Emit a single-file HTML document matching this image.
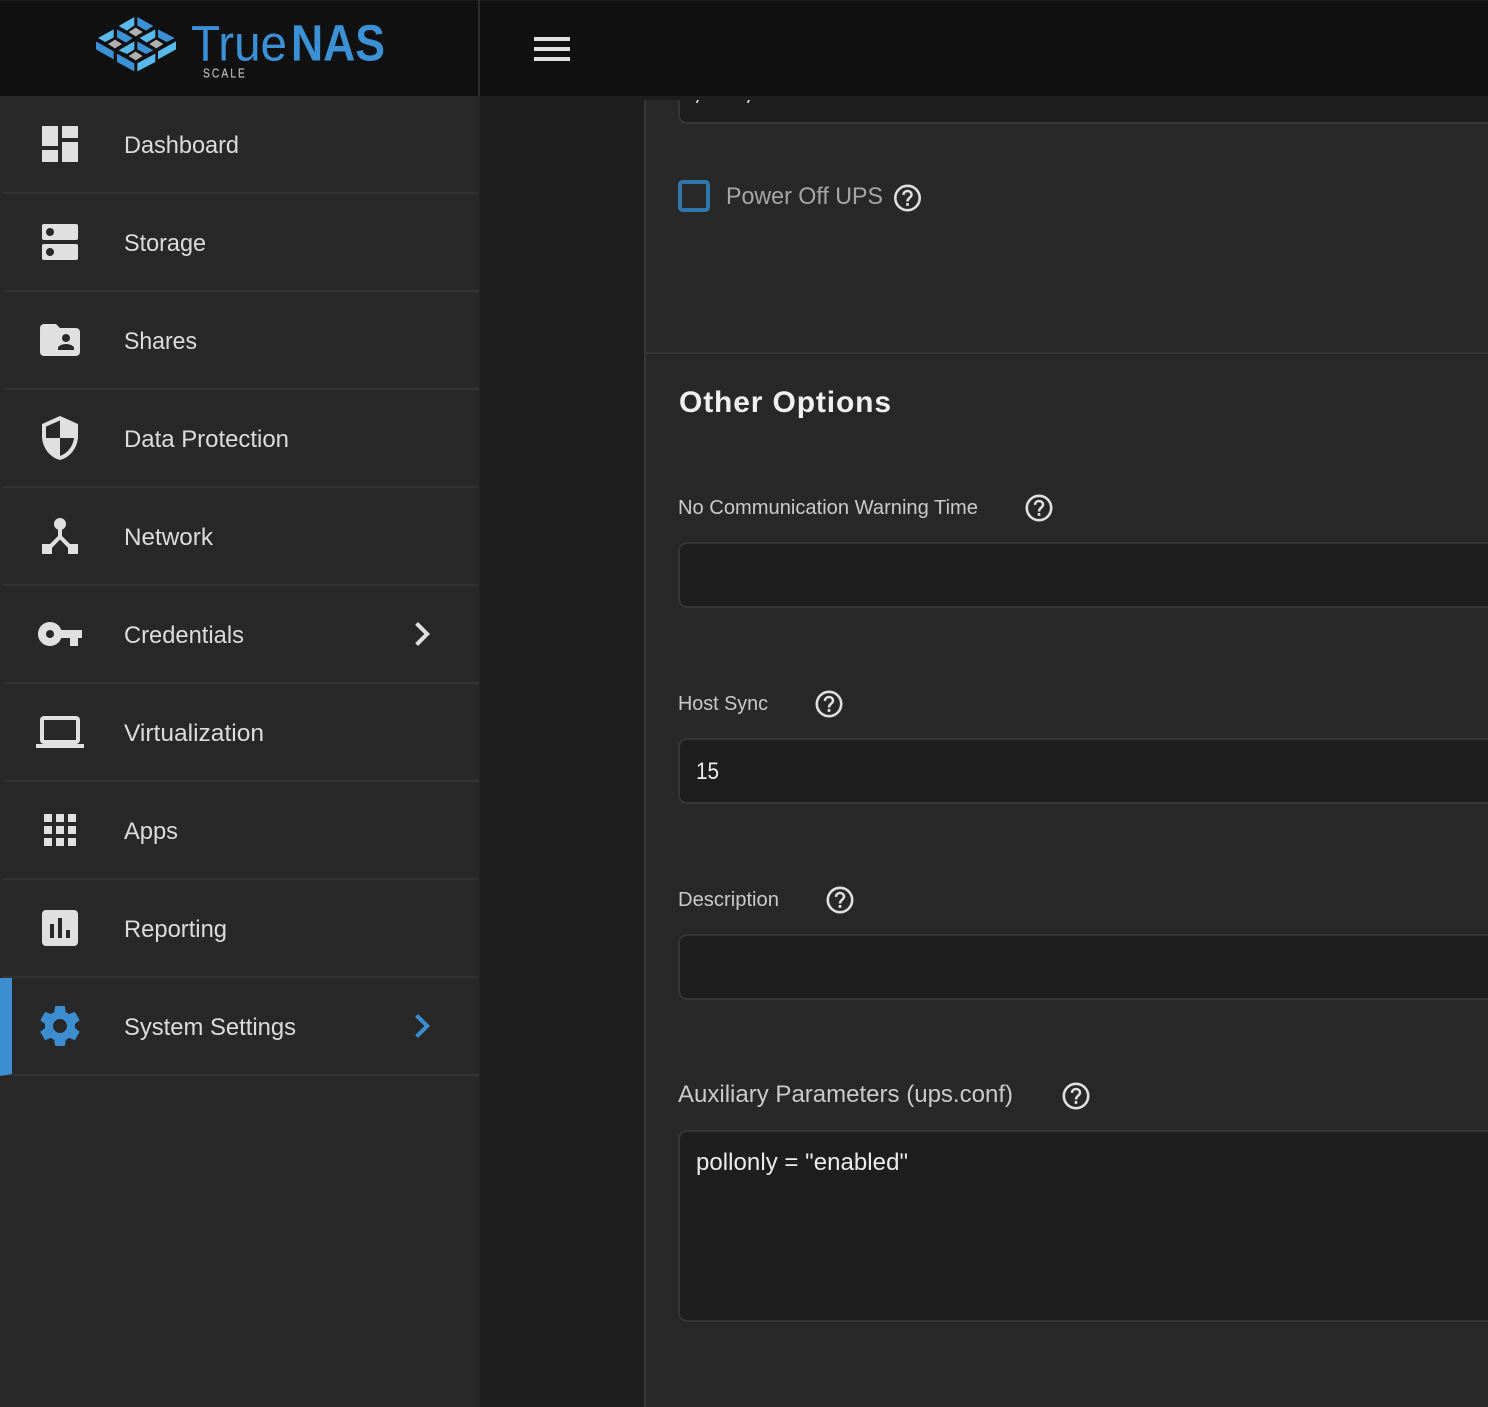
<!DOCTYPE html>
<html lang="en">
<head>
<meta charset="utf-8">
<title>TrueNAS SCALE</title>
<style>
html,body{margin:0;padding:0;background:#1e1e1e;width:1488px;height:1407px;overflow:hidden}
svg{display:block;position:absolute;left:0;top:0}
text{font-family:"Liberation Sans",sans-serif}
.nav{font-size:24px;fill:#dcdcdc}
.lbl{font-size:20.5px;fill:#cacaca}
.val{font-size:24px;fill:#ececec}
.ic{fill:#e0e0e0}
.sep{fill:#333}
.inp{fill:#1e1e1e;stroke:#363636;stroke-width:2}
</style>
</head>
<body>
<svg width="1488" height="1407" viewBox="0 0 1488 1407" xmlns="http://www.w3.org/2000/svg">
<defs>
<g id="help">
<circle cx="16" cy="16" r="12.2" fill="none" stroke="#e0e0e0" stroke-width="2.6"/>
<path d="M12 12.9c0-2.3 1.7-3.9 4-3.9s4 1.5 4 3.6c0 3.2-4 3-4 6.9" fill="none" stroke="#e0e0e0" stroke-width="2.5"/>
<rect x="14.7" y="21" width="2.6" height="2.9" fill="#e0e0e0"/>
</g>
<path id="chev" d="M10 6L8.59 7.41 13.17 12l-4.58 4.59L10 18l6-6z"/>
</defs>

<!-- backgrounds -->
<rect x="0" y="0" width="1488" height="1407" fill="#1e1e1e"/>
<rect x="0" y="96" width="478" height="1311" fill="#282828"/>
<rect x="478" y="96" width="2" height="1311" fill="#262626"/>

<!-- card -->
<rect x="644" y="100" width="844" height="1307" fill="#282828"/>
<rect x="644" y="100" width="2" height="1307" fill="#363636"/>
<rect x="646" y="352" width="842" height="2" fill="#363636"/>

<!-- clipped first input -->
<rect x="679" y="60" width="900" height="63" rx="8" class="inp"/>
<polygon points="697,100 699,100 697.4,103 696,103" fill="#eee"/>
<polygon points="748,100 750,100 748.4,103 747,103" fill="#eee"/>
<rect x="644" y="96" width="844" height="4" fill="#1e1e1e"/>

<!-- header -->
<rect x="0" y="0" width="1488" height="96" fill="#111"/>
<rect x="0" y="0" width="1488" height="1" fill="#1a1a1a"/>
<rect x="478" y="0" width="2" height="96" fill="#2c2c2c"/>

<!-- logo -->
<g transform="translate(92 12) scale(.3333)">
<g fill="#5ab9ec">
<polygon points="80,42 127,15 127,40 105,56"/>
<polygon points="190,52 143,78 164,92 190,76"/>
<polygon points="18,78 65,52 65,76 40,90"/>
<polygon points="80,115 127,88 127,112 105,126"/>
<polygon points="252,88 252,112 198,142 198,118"/>
<polygon points="136,154 136,178 190,150 190,125"/>
</g>
<g fill="#3c91d6">
<polygon points="136,15 184,42 162,56 136,40"/>
<polygon points="75,52 122,78 102,92 75,76"/>
<polygon points="198,52 248,78 224,90 198,76"/>
<polygon points="136,88 184,115 162,126 136,112"/>
<polygon points="12,88 12,112 65,142 65,118"/>
<polygon points="75,125 75,150 127,178 127,154"/>
</g>
<g fill="#b0b0b0">
<polygon points="131,47 152,60 131,73 110,60"/>
<polygon points="69,83 90,96 69,109 48,96"/>
<polygon points="193,83 214,96 193,109 172,96"/>
<polygon points="131,119 152,132 131,145 110,132"/>
</g>
</g>
<text x="191" y="60.5" font-size="50" fill="#3c91d6" textLength="96" lengthAdjust="spacingAndGlyphs">True</text>
<text x="291" y="60.5" font-size="51" font-weight="700" fill="#3c91d6" textLength="94" lengthAdjust="spacingAndGlyphs">NAS</text>
<text transform="translate(203 77.5) scale(.82 1)" x="0" y="0" font-size="12.5" fill="#b4b4b4" stroke="#b4b4b4" stroke-width=".25" textLength="51" lengthAdjust="spacing">SCALE</text>

<!-- hamburger -->
<rect x="534" y="37" width="36" height="4" fill="#e0e0e0"/>
<rect x="534" y="47" width="36" height="4" fill="#e0e0e0"/>
<rect x="534" y="57" width="36" height="4" fill="#e0e0e0"/>

<!-- sidebar separators -->
<rect class="sep" x="3" y="192" width="475" height="2"/>
<rect class="sep" x="3" y="290" width="475" height="2"/>
<rect class="sep" x="3" y="388" width="475" height="2"/>
<rect class="sep" x="3" y="486" width="475" height="2"/>
<rect class="sep" x="3" y="584" width="475" height="2"/>
<rect class="sep" x="3" y="682" width="475" height="2"/>
<rect class="sep" x="3" y="780" width="475" height="2"/>
<rect class="sep" x="3" y="878" width="475" height="2"/>
<rect class="sep" x="3" y="976" width="475" height="2"/>
<rect class="sep" x="3" y="1074" width="475" height="2"/>
<polygon points="0,978 12,978 12,1074 0,1076" fill="#3c8ed1"/>

<!-- sidebar icons -->
<g class="ic">
<path transform="translate(36 120) scale(2)" d="M3 13h8V3H3v10zm0 8h8v-6H3v6zm10 0h8V11h-8v10zm0-18v6h8V3h-8z"/>
<path fill-rule="evenodd" d="M44 224h32a2 2 0 0 1 2 2v12a2 2 0 0 1-2 2H44a2 2 0 0 1-2-2v-12a2 2 0 0 1 2-2zm6 4a4 4 0 1 0 0 8 4 4 0 0 0 0-8zM44 244h32a2 2 0 0 1 2 2v12a2 2 0 0 1-2 2H44a2 2 0 0 1-2-2v-12a2 2 0 0 1 2-2zm6 4a4 4 0 1 0 0 8 4 4 0 0 0 0-8z"/>
<path transform="translate(36 316) scale(2)" d="M20 6h-8l-2-2H4c-1.1 0-1.99.9-1.99 2L2 18c0 1.1.9 2 2 2h16c1.1 0 2-.9 2-2V8c0-1.1-.9-2-2-2zm-5 3c1.1 0 2 .9 2 2s-.9 2-2 2-2-.9-2-2 .9-2 2-2zm4 8h-8v-1c0-1.33 2.67-2 4-2s4 .67 4 2v1z"/>
<path transform="translate(36 414) scale(2)" d="M12 1L3 5v6c0 5.55 3.84 10.74 9 12 5.16-1.26 9-6.45 9-12V5l-9-4zm0 10.99h7c-.53 4.12-3.28 7.79-7 8.94V12H5V6.3l7-3.11v8.8z"/>
<path transform="translate(36 512) scale(2)" d="M17 16l-4-4V8.82C14.16 8.4 15 7.3 15 6c0-1.66-1.34-3-3-3S9 4.34 9 6c0 1.3.84 2.4 2 2.82V12l-4 4H3v5h5v-3.05l4-4.2 4 4.2V21h5v-5h-4z"/>
<path transform="translate(36 610) scale(2)" d="M12.65 10C11.83 7.67 9.61 6 7 6c-3.31 0-6 2.69-6 6s2.69 6 6 6c2.61 0 4.83-1.67 5.65-4H17v4h4v-4h2v-4H12.65zM7 14c-1.1 0-2-.9-2-2s.9-2 2-2 2 .9 2 2-.9 2-2 2z"/>
<path transform="translate(36 708) scale(2)" d="M20 18c1.1 0 1.99-.9 1.99-2L22 6c0-1.1-.9-2-2-2H4c-1.1 0-2 .9-2 2v10c0 1.1.9 2 2 2H0v2h24v-2h-4zM4 6h16v10H4V6z"/>
<path transform="translate(36 806) scale(2)" d="M4 8h4V4H4v4zm6 12h4v-4h-4v4zm-6 0h4v-4H4v4zm0-6h4v-4H4v4zm6 0h4v-4h-4v4zm6-10v4h4V4h-4zm-6 4h4V4h-4v4zm6 6h4v-4h-4v4zm0 6h4v-4h-4v4z"/>
<path transform="translate(36 904) scale(2)" d="M19 3H5c-1.1 0-2 .9-2 2v14c0 1.1.9 2 2 2h14c1.1 0 2-.9 2-2V5c0-1.1-.9-2-2-2zM9 17H7v-7h2v7zm4 0h-2V7h2v10zm4 0h-2v-4h2v4z"/>
<use href="#chev" transform="translate(398 610) scale(2)"/>
</g>
<path fill="#3c8ed1" transform="translate(36 1002) scale(2)" d="M19.43 12.98c.04-.32.07-.64.07-.98s-.03-.66-.07-.98l2.11-1.65c.19-.15.24-.42.12-.64l-2-3.46c-.12-.22-.39-.3-.61-.22l-2.49 1c-.52-.4-1.08-.73-1.69-.98l-.38-2.65C14.46 2.18 14.25 2 14 2h-4c-.25 0-.46.18-.49.42l-.38 2.65c-.61.25-1.17.59-1.69.98l-2.49-1c-.23-.09-.49 0-.61.22l-2 3.46c-.13.22-.07.49.12.64l2.11 1.65c-.04.32-.07.65-.07.98s.03.66.07.98l-2.11 1.65c-.19.15-.24.42-.12.64l2 3.46c.12.22.39.3.61.22l2.49-1c.52.4 1.08.73 1.69.98l.38 2.65c.03.24.24.42.49.42h4c.25 0 .46-.18.49-.42l.38-2.65c.61-.25 1.17-.59 1.69-.98l2.49 1c.23.09.49 0 .61-.22l2-3.46c.12-.22.07-.49-.12-.64l-2.11-1.65zM12 15.5c-1.93 0-3.5-1.57-3.5-3.5s1.57-3.5 3.5-3.5 3.5 1.57 3.5 3.5-1.57 3.5-3.5 3.5z"/>
<use href="#chev" fill="#3c8ed1" transform="translate(398 1002) scale(2)"/>

<!-- sidebar labels -->
<text class="nav" x="124" y="153" textLength="115" lengthAdjust="spacingAndGlyphs">Dashboard</text>
<text class="nav" x="124" y="251" textLength="82" lengthAdjust="spacingAndGlyphs">Storage</text>
<text class="nav" x="124" y="349" textLength="73" lengthAdjust="spacingAndGlyphs">Shares</text>
<text class="nav" x="124" y="447" textLength="165" lengthAdjust="spacingAndGlyphs">Data Protection</text>
<text class="nav" x="124" y="545" textLength="89" lengthAdjust="spacingAndGlyphs">Network</text>
<text class="nav" x="124" y="643" textLength="120" lengthAdjust="spacingAndGlyphs">Credentials</text>
<text class="nav" x="124" y="741" textLength="140" lengthAdjust="spacingAndGlyphs">Virtualization</text>
<text class="nav" x="124" y="839" textLength="54" lengthAdjust="spacingAndGlyphs">Apps</text>
<text class="nav" x="124" y="937" textLength="103" lengthAdjust="spacingAndGlyphs">Reporting</text>
<text class="nav" x="124" y="1035" textLength="172" lengthAdjust="spacingAndGlyphs">System Settings</text>

<!-- checkbox row -->
<rect x="680" y="182" width="28" height="28" rx="2.5" fill="none" stroke="#2f76ab" stroke-width="4"/>
<text x="726" y="204" font-size="24" fill="#a6a6a6" textLength="157" lengthAdjust="spacingAndGlyphs">Power Off UPS</text>
<use href="#help" transform="translate(891.5 182)"/>

<!-- Other options -->
<text x="679" y="412" font-size="30" font-weight="700" fill="#f0f0f0" textLength="212" lengthAdjust="spacing">Other Options</text>

<text class="lbl" x="678" y="514" textLength="300" lengthAdjust="spacingAndGlyphs">No Communication Warning Time</text>
<use href="#help" transform="translate(1023 492)"/>
<rect class="inp" x="679" y="543" width="900" height="64" rx="8"/>

<text class="lbl" x="678" y="710" textLength="90" lengthAdjust="spacingAndGlyphs">Host Sync</text>
<use href="#help" transform="translate(813 688)"/>
<rect class="inp" x="679" y="739" width="900" height="64" rx="8"/>
<text class="val" x="696" y="779" textLength="23" lengthAdjust="spacingAndGlyphs">15</text>

<text class="lbl" x="678" y="906" textLength="101" lengthAdjust="spacingAndGlyphs">Description</text>
<use href="#help" transform="translate(824 884)"/>
<rect class="inp" x="679" y="935" width="900" height="64" rx="8"/>

<text x="678" y="1102" font-size="24" fill="#cacaca" textLength="335" lengthAdjust="spacingAndGlyphs">Auxiliary Parameters (ups.conf)</text>
<use href="#help" transform="translate(1060 1080)"/>
<rect class="inp" x="679" y="1131" width="900" height="190" rx="8"/>
<text class="val" x="696" y="1170" textLength="212" lengthAdjust="spacing">pollonly = "enabled"</text>
</svg>
</body>
</html>
